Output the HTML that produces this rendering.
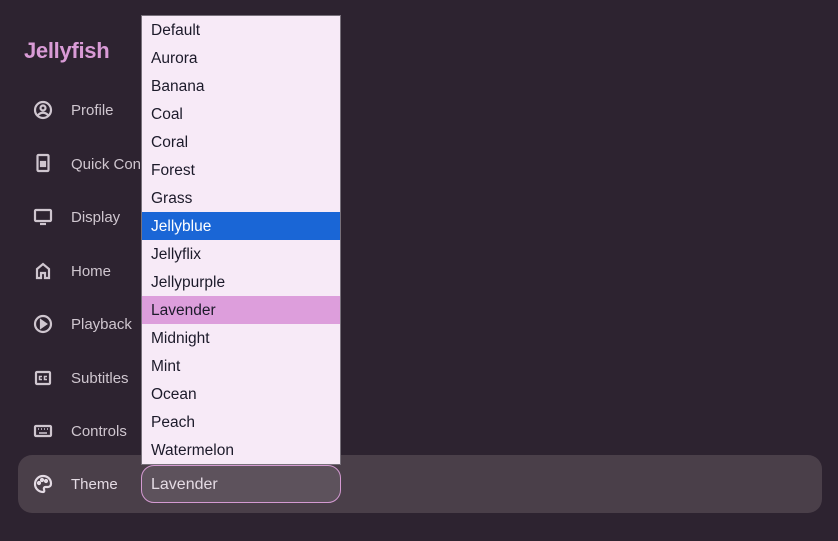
<!DOCTYPE html>
<html><head><meta charset="utf-8"><style>
*{margin:0;padding:0;box-sizing:border-box}
html,body{width:838px;height:541px;overflow:hidden;background:#2d2330;font-family:"Liberation Sans",sans-serif}
.logo{position:absolute;left:24px;top:38px;font-size:22px;font-weight:bold;color:#d99bd6;letter-spacing:-0.3px}
.nav{position:absolute;left:71px;font-size:15px;color:#cfc6cf}
.ic{position:absolute;left:33px;width:20px;height:20px}
.row{position:absolute;left:18px;top:455px;width:804px;height:58px;background:#4a3f49;border-radius:14px}
.sel{position:absolute;left:141px;top:465px;width:200px;height:38px;background:#5d525c;border:1px solid #d49ad2;border-radius:13px;color:#e4dbe4;font-size:16px;padding:10px 0 0 9px}
.list{position:absolute;left:141px;top:15px;width:200px;height:450px;background:#f7eaf7;border:1px solid #77707a}
.list div{height:28px;line-height:30px;padding-left:9px;font-size:15.5px;color:#1c1a2a}
.list .b{background:#1a66d6;color:#fff}
.list .l{background:#dd9edc}
</style></head><body>
<div class="logo">Jellyfish</div>
<svg class="ic" style="top:100px" viewBox="0 0 20 20" fill="none" stroke="#cfc6cf" stroke-width="2.2"><circle cx="10" cy="10" r="8"/><circle cx="10" cy="8" r="2.5"/><path d="M5 15c3-3 7-3 10 0"/></svg>
<div class="nav" style="top:102px">Profile</div>
<svg class="ic" style="top:153px" viewBox="0 0 20 20" fill="none" stroke="#cfc6cf" stroke-width="2.2"><rect x="4.5" y="2" width="11" height="16" rx="1"/><rect x="8" y="9" width="4" height="4" fill="#cfc6cf"/></svg>
<div class="nav" style="top:156px">Quick Con</div>
<svg class="ic" style="top:207px" viewBox="0 0 20 20" fill="none" stroke="#cfc6cf" stroke-width="2.2"><rect x="2" y="3" width="16" height="11" rx="1"/><path d="M7 17h6"/></svg>
<div class="nav" style="top:209px">Display</div>
<svg class="ic" style="top:261px" viewBox="0 0 20 20" fill="none" stroke="#cfc6cf" stroke-width="2.2"><path d="M4 17V8l6-5 6 5v9h-4v-5H8v5z"/></svg>
<div class="nav" style="top:263px">Home</div>
<svg class="ic" style="top:314px" viewBox="0 0 20 20" fill="none" stroke="#cfc6cf" stroke-width="2.2"><circle cx="10" cy="10" r="8"/><path d="M8 6.5v7l5-3.5z" fill="#cfc6cf"/></svg>
<div class="nav" style="top:316px">Playback</div>
<svg class="ic" style="top:368px" viewBox="0 0 20 20" fill="none" stroke="#cfc6cf" stroke-width="2.2"><rect x="3" y="4" width="14" height="12" rx="1"/><path d="M9 8.5H6.5v3H9M14 8.5h-2.5v3H14" stroke-width="1.5"/></svg>
<div class="nav" style="top:370px">Subtitles</div>
<svg class="ic" style="top:421px" viewBox="0 0 20 20" fill="none" stroke="#cfc6cf" stroke-width="2.2"><rect x="2" y="5" width="16" height="10" rx="1"/><path d="M5 8h1M8 8h1M11 8h1M14 8h1M6 12h8" stroke-width="1.5"/></svg>
<div class="nav" style="top:423px">Controls</div>
<div class="row"></div>
<svg class="ic" style="top:474px" viewBox="0 0 20 20" fill="none" stroke="#e4dbe4" stroke-width="2.2"><path d="M10 2a8 8 0 0 0 0 16c1.5 0 1.5-1.5 1-2.5s0-2.5 1.5-2.5H15c2 0 3-1.5 3-3.5C18 5 14.5 2 10 2z"/><circle cx="6" cy="9" r="1" fill="#e4dbe4"/><circle cx="9" cy="6" r="1" fill="#e4dbe4"/><circle cx="13" cy="7" r="1" fill="#e4dbe4"/></svg>
<div class="nav" style="top:476px;color:#e4dbe4">Theme</div>
<div class="sel">Lavender</div>
<div class="list">
<div>Default</div><div>Aurora</div><div>Banana</div><div>Coal</div><div>Coral</div><div>Forest</div><div>Grass</div><div class="b">Jellyblue</div><div>Jellyflix</div><div>Jellypurple</div><div class="l">Lavender</div><div>Midnight</div><div>Mint</div><div>Ocean</div><div>Peach</div><div>Watermelon</div>
</div>
</body></html>
